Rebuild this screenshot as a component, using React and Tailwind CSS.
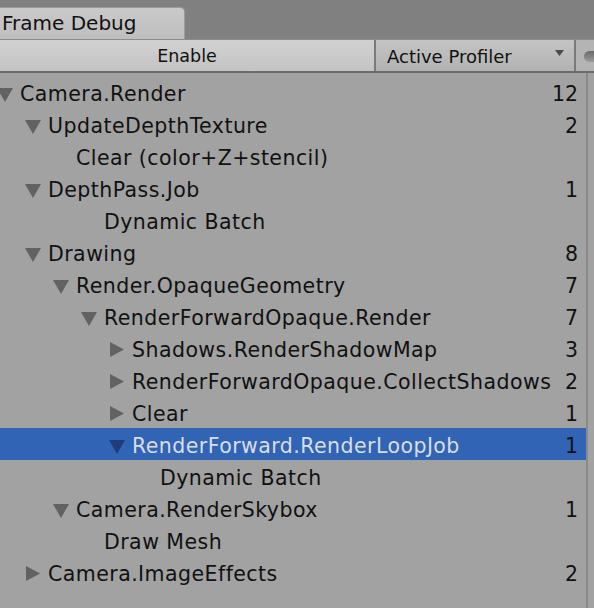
const rows = [
  { level: 0, label: 'Camera.Render', count: '12', arrow: 'down' },
  { level: 1, label: 'UpdateDepthTexture', count: '2', arrow: 'down' },
  { level: 2, label: 'Clear (color+Z+stencil)', leaf: true },
  { level: 1, label: 'DepthPass.Job', count: '1', arrow: 'down' },
  { level: 3, label: 'Dynamic Batch', leaf: true },
  { level: 1, label: 'Drawing', count: '8', arrow: 'down' },
  { level: 2, label: 'Render.OpaqueGeometry', count: '7', arrow: 'down' },
  { level: 3, label: 'RenderForwardOpaque.Render', count: '7', arrow: 'down' },
  { level: 4, label: 'Shadows.RenderShadowMap', count: '3', arrow: 'right' },
  { level: 4, label: 'RenderForwardOpaque.CollectShadows', count: '2', arrow: 'right' },
  { level: 4, label: 'Clear', count: '1', arrow: 'right' },
  { level: 4, label: 'RenderForward.RenderLoopJob', count: '1', arrow: 'down', selected: true },
  { level: 5, label: 'Dynamic Batch', leaf: true },
  { level: 2, label: 'Camera.RenderSkybox', count: '1', arrow: 'down' },
  { level: 3, label: 'Draw Mesh', leaf: true },
  { level: 1, label: 'Camera.ImageEffects', count: '2', arrow: 'right' },
]

function Arrow({ dir, selected }) {
  const fill = selected ? '#1f3d7a' : '#626262'
  if (dir === 'down') {
    return (
      <svg width="16" height="14" viewBox="0 0 16 14" className="-ml-[3px] mt-[1px]">
        <polygon points="0,0 16,0 8,14" fill={fill} />
      </svg>
    )
  }
  return (
    <svg width="14" height="15" viewBox="0 0 14 15" className="-ml-[2px] -mt-[1px]">
      <polygon points="0,0 14,7.5 0,15" fill={fill} />
    </svg>
  )
}

export default function App() {
  return (
    <div className="w-[594px] h-[608px] overflow-hidden bg-[#a2a2a2] font-['DejaVu_Sans',sans-serif] text-[#111]">
      {/* tab strip */}
      <div className="h-[39px] bg-[#808080] flex items-end">
        <div className="w-[185px] h-[32px] bg-gradient-to-b from-[#cacaca] to-[#bebebe] border-t border-r border-[#9c9c9c] rounded-tr-[5px] pl-[2px] text-[20px] leading-[30px] text-[#111]">
          Frame Debug
        </div>
      </div>

      {/* toolbar */}
      <div className="h-[34px] flex border-t border-[#8c8c8c] border-b-2 border-b-[#6c6c6c] bg-gradient-to-b from-[#d2d2d2] to-[#c3c3c3]">
        <div className="w-[374px] shrink-0 flex items-center justify-center text-[17.5px] pt-[1px]">Enable</div>
        <div className="w-[2px] shrink-0 bg-[#7a7a7a]" />
        <div className="w-[198px] shrink-0 flex items-center bg-gradient-to-b from-[#c4c4c4] to-[#b2b2b2] pl-[11px] pr-[10px] text-[18px]">
          <span className="pt-[1px]">Active Profiler</span>
          <svg width="9" height="6" viewBox="0 0 9 6" className="ml-auto mb-[6px]">
            <polygon points="0,0 9,0 4.5,6" fill="#4a4a4a" />
          </svg>
        </div>
        <div className="w-[2px] shrink-0 bg-[#7a7a7a]" />
        <div className="flex-1 bg-[#b4b4b4] flex items-center pl-[8px]">
          <div className="w-[20px] h-[11px] shrink-0 rounded-l-full bg-gradient-to-b from-[#6a6a6a] to-[#9a9a9a] mt-[1px]" />
        </div>
      </div>

      {/* tree */}
      <div className="flex h-full">
        <div className="w-[586px] shrink-0 pt-[3px]">
          {rows.map((r, i) => (
            <div
              key={i}
              className={`h-[32px] flex items-center pt-[4px] text-[20.5px] tracking-[0.45px] ${r.selected ? 'bg-[#3264b6] text-[#d9dde6]' : ''}`}
              style={{ paddingLeft: r.level * 28 }}
            >
              <span className="w-[20px] shrink-0 flex">
                {!r.leaf && <Arrow dir={r.arrow} selected={r.selected} />}
              </span>
              <span className="whitespace-nowrap">{r.label}</span>
              {r.count && <span className={`ml-auto pr-[8px] tracking-normal ${r.selected ? 'text-[#111]' : ''}`}>{r.count}</span>}
            </div>
          ))}
        </div>
        <div className="w-[2px] shrink-0 bg-[#8a8a8a]" />
        <div className="flex-1" />
      </div>
    </div>
  )
}
